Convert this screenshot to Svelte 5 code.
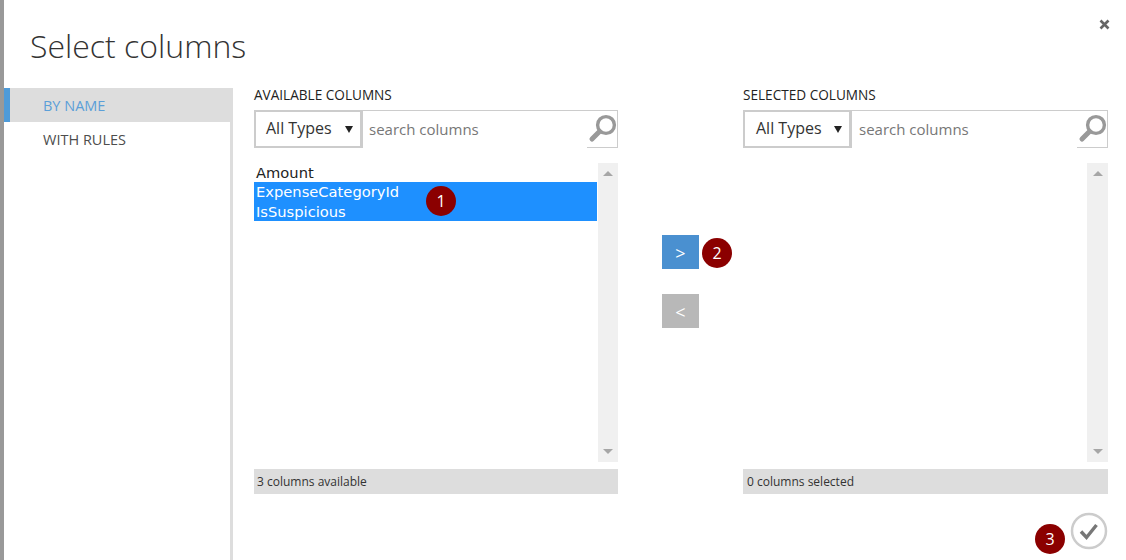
<script>
    const panels = [
        { title: "AVAILABLE COLUMNS", status: "3 columns available", rows: ["Amount", "ExpenseCategoryId", "IsSuspicious"], selected: [1, 2] },
        { title: "SELECTED COLUMNS", status: "0 columns selected", rows: [], selected: [] }
    ];
</script>

{#snippet panel(p)}
    <section class="panel">
        <h2>{p.title}</h2>
        <div class="filter">
            <div class="select">All Types<span class="caret"></span></div>
            <div class="search">
                <span>search columns</span>
                <div class="lens">
                    <svg width="30" height="30" viewBox="0 0 30 30">
                        <circle cx="19" cy="11" r="8.4" fill="none" stroke="#999" stroke-width="3.4" />
                        <path d="M12.5 17.5 L5 25" stroke="#999" stroke-width="5" stroke-linecap="round" />
                    </svg>
                </div>
            </div>
        </div>
        <div class="list">
            <ul>
                {#each p.rows as row, i}
                    <li class:selected={p.selected.includes(i)}>{row}</li>
                {/each}
            </ul>
            <div class="scroll">
                <span class="up"></span>
                <span class="down"></span>
            </div>
        </div>
        <div class="status">{p.status}</div>
    </section>
{/snippet}

<div class="dialog">
    <div class="strip"></div>
    <div class="content">
        <header>
            <h1>Select columns</h1>
            <svg class="close" width="11" height="11" viewBox="0 0 11 11">
                <path d="M1.5 1.5 L9.5 9.5 M9.5 1.5 L1.5 9.5" stroke="#666" stroke-width="2.6" />
            </svg>
        </header>
        <div class="body">
            <nav>
                <div class="tab active">BY NAME</div>
                <div class="tab">WITH RULES</div>
            </nav>
            <main>
                <div class="columns">
                    {@render panel(panels[0])}
                    <div class="moves">
                        <button class="add">&gt;</button>
                        <button class="remove">&lt;</button>
                    </div>
                    {@render panel(panels[1])}
                </div>
                <footer>
                    <div class="ok">
                        <svg width="38" height="38" viewBox="0 0 38 38">
                            <circle cx="19" cy="19" r="17" fill="#fff" stroke="#ccc" stroke-width="2.5" />
                            <path d="M11 19.5 L16.5 25.5 L26.5 13" fill="none" stroke="#777" stroke-width="3.4" />
                        </svg>
                    </div>
                </footer>
            </main>
        </div>
    </div>
    <span class="badge b1">1</span>
    <span class="badge b2">2</span>
    <span class="badge b3">3</span>
</div>

<style>
    :global(body) {
        margin: 0;
        background: #fff;
    }
    .dialog {
        position: relative;
        display: flex;
        height: 560px;
        overflow: hidden;
        font-family: "Open Sans", "Noto Sans", sans-serif;
        color: #333;
    }
    .strip {
        width: 4px;
        background: #999;
    }
    .content {
        flex: 1;
        display: flex;
        flex-direction: column;
    }
    header {
        position: relative;
        height: 88px;
    }
    h1 {
        margin: 0;
        padding: 23px 0 0 26px;
        font-size: 32px;
        line-height: 46px;
        font-weight: 300;
        color: #333;
    }
    .close {
        position: absolute;
        top: 19px;
        right: 16px;
    }
    .body {
        flex: 1;
        display: flex;
    }
    nav {
        width: 229px;
        box-sizing: border-box;
        border-right: 3px solid #ddd;
    }
    .tab {
        height: 34px;
        line-height: 35px;
        padding-left: 39px;
        font-size: 14.5px;
        font-weight: 500;
        color: #4d4d4d;
    }
    .tab.active {
        margin-right: -3px;
        padding-left: 33px;
        border-left: 6px solid #4e9bd9;
        background: #ddd;
        color: #5b9fd8;
    }
    main {
        flex: 1;
        padding-left: 21px;
    }
    .columns {
        display: flex;
    }
    .panel {
        width: 364px;
    }
    .panel:last-child {
        width: 365px;
    }
    h2 {
        margin: 0;
        height: 22px;
        font-size: 13.6px;
        line-height: 13px;
        font-weight: 500;
        color: #222;
    }
    .filter {
        display: flex;
        height: 38px;
    }
    .select {
        position: relative;
        width: 109px;
        box-sizing: border-box;
        padding-left: 10px;
        font-size: 16px;
        line-height: 33px;
        border: 2px solid #ccc;
        border-right-width: 3px;
        color: #333;
    }
    .panel:last-child .select {
        padding-left: 11px;
    }
    .caret {
        position: absolute;
        right: 7px;
        top: 14px;
        border: 4px solid transparent;
        border-top: 7px solid #222;
        border-bottom: 0;
    }
    .search {
        flex: 1;
        display: flex;
        align-items: center;
        justify-content: space-between;
        padding-left: 6px;
        border: solid #ccc;
        border-width: 1px 1px 0 0;
        font-size: 15px;
        color: #777;
    }
    .panel:last-child .search {
        padding-left: 7px;
    }
    .search span {
        padding-bottom: 2px;
    }
    .lens {
        align-self: stretch;
        width: 30px;
        padding-top: 3px;
        box-sizing: border-box;
        border-bottom: 1px solid #ccc;
    }
    .list {
        display: flex;
        justify-content: space-between;
        height: 299px;
        margin-top: 15px;
    }
    ul {
        flex: 1;
        margin: 0 1px 0 0;
        padding: 0;
        list-style: none;
        font-family: "DejaVu Sans", sans-serif;
        font-size: 14.7px;
    }
    li {
        height: 19.4px;
        box-sizing: border-box;
        padding: 1px 0 0 2px;
        line-height: 18px;
        color: #222;
    }
    li.selected {
        background: #1e90ff;
        color: #fff;
    }
    .scroll {
        width: 20px;
        display: flex;
        flex-direction: column;
        justify-content: space-between;
        align-items: center;
        padding: 8px 0;
        box-sizing: border-box;
        background: #f0f0f0;
    }
    .panel:last-child .scroll {
        width: 21px;
    }
    .up,
    .down {
        border: 5px solid transparent;
        border-top-width: 0;
        border-bottom: 5px solid #a6a6a6;
    }
    .down {
        border-top: 5px solid #a6a6a6;
        border-bottom-width: 0;
    }
    .status {
        height: 25px;
        margin-top: 7px;
        padding-left: 3px;
        line-height: 25px;
        font-size: 12px;
        background: #ddd;
    }
    .panel:last-child .status {
        padding-left: 4px;
    }
    .moves {
        width: 125px;
        box-sizing: border-box;
        padding: 147px 0 0 44px;
        display: flex;
        flex-direction: column;
        gap: 25px;
    }
    button {
        width: 37px;
        height: 34px;
        border: 0;
        padding: 1px 0 0;
        color: #fff;
        font: 500 18px "Open Sans", sans-serif;
    }
    .add {
        background: #4a90d0;
    }
    .remove {
        background: #b8b8b8;
    }
    footer {
        display: flex;
        justify-content: flex-end;
        padding: 18px 18px 0 0;
    }
    .ok {
        height: 38px;
    }
    .badge {
        position: absolute;
        width: 30px;
        height: 30px;
        border-radius: 50%;
        background: #8b0000;
        color: #fff;
        font-size: 16px;
        line-height: 30px;
        text-align: center;
    }
    .b1 {
        left: 426px;
        top: 186px;
    }
    .b2 {
        left: 702px;
        top: 238px;
    }
    .b3 {
        left: 1035px;
        top: 524px;
    }
</style>
